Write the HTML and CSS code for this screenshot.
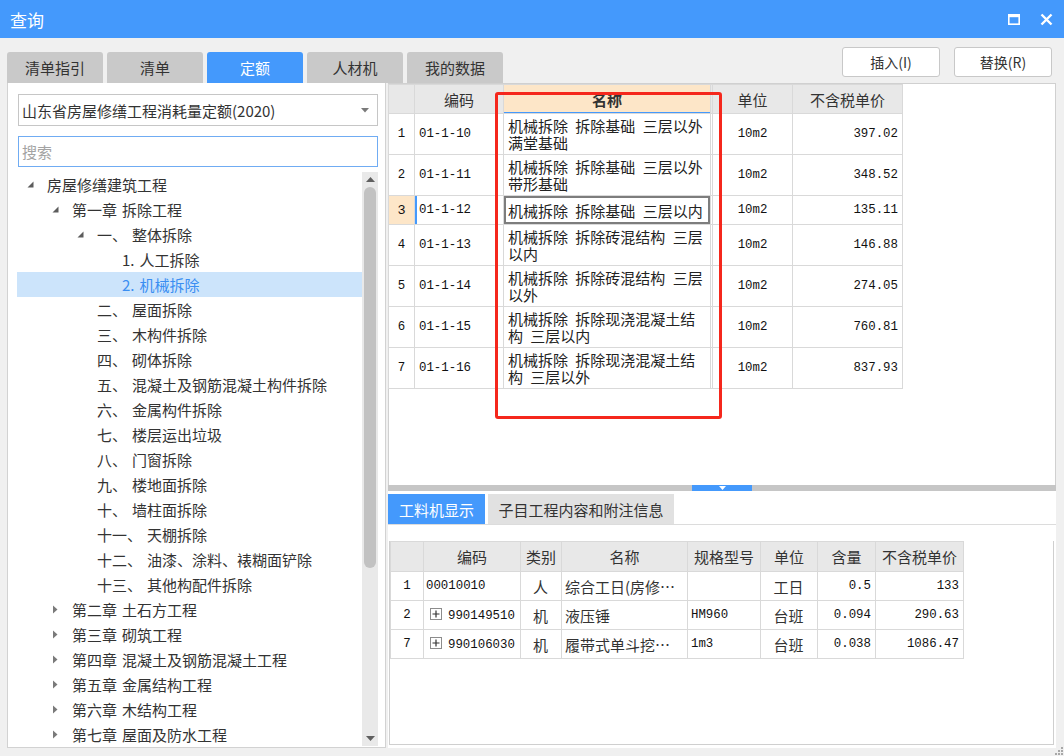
FILE: index.html
```html
<!DOCTYPE html>
<html lang="zh-CN">
<head>
<meta charset="utf-8">
<title>查询</title>
<link rel="stylesheet" href="styles.css">
</head>
<body>
<div class="window">
  <header class="titlebar">
    <span class="title">查询</span>
    <div class="win-ctrls">
      <svg class="ic-max" width="12" height="11" viewBox="0 0 12 11"><rect x="0" y="0" width="12" height="3.2" fill="#fff"/><rect x="0.8" y="1" width="10.4" height="9.2" fill="none" stroke="#fff" stroke-width="1.6"/></svg>
      <svg class="ic-close" width="13" height="13" viewBox="0 0 13 13"><path d="M1.5 1.5 L11.5 11.5 M11.5 1.5 L1.5 11.5" stroke="#fff" stroke-width="2.4"/></svg>
    </div>
  </header>

  <div class="toolbar">
    <div class="tabs">
      <div class="tab">清单指引</div>
      <div class="tab">清单</div>
      <div class="tab active">定额</div>
      <div class="tab">人材机</div>
      <div class="tab">我的数据</div>
    </div>
    <div class="actions">
      <button class="btn">插入(I)</button>
      <button class="btn">替换(R)</button>
    </div>
  </div>

  <div class="main">
    <aside class="left">
      <div class="select">
        <span class="select-text">山东省房屋修缮工程消耗量定额(2020)</span>
        <svg width="8" height="5" viewBox="0 0 8 5"><polygon points="0,0 8,0 4,4.5" fill="#7a7a7a"/></svg>
      </div>
      <div class="search">搜索</div>
      <div class="tree-wrap">
        <ul class="tree">
          <li class="node l0"><span class="tw"><svg width="7" height="7" viewBox="0 0 7 7"><polygon points="6.5,0.5 6.5,6.5 0.5,6.5" fill="#5c5c5c"/></svg></span>房屋修缮建筑工程</li>
          <li class="node l1"><span class="tw"><svg width="7" height="7" viewBox="0 0 7 7"><polygon points="6.5,0.5 6.5,6.5 0.5,6.5" fill="#5c5c5c"/></svg></span>第一章 拆除工程</li>
          <li class="node l2"><span class="tw"><svg width="7" height="7" viewBox="0 0 7 7"><polygon points="6.5,0.5 6.5,6.5 0.5,6.5" fill="#5c5c5c"/></svg></span>一、 整体拆除</li>
          <li class="node l3"><span class="tw"></span>1. 人工拆除</li>
          <li class="node l3 sel"><span class="tw"></span>2. 机械拆除</li>
          <li class="node l2"><span class="tw"></span>二、 屋面拆除</li>
          <li class="node l2"><span class="tw"></span>三、 木构件拆除</li>
          <li class="node l2"><span class="tw"></span>四、 砌体拆除</li>
          <li class="node l2"><span class="tw"></span>五、 混凝土及钢筋混凝土构件拆除</li>
          <li class="node l2"><span class="tw"></span>六、 金属构件拆除</li>
          <li class="node l2"><span class="tw"></span>七、 楼层运出垃圾</li>
          <li class="node l2"><span class="tw"></span>八、 门窗拆除</li>
          <li class="node l2"><span class="tw"></span>九、 楼地面拆除</li>
          <li class="node l2"><span class="tw"></span>十、 墙柱面拆除</li>
          <li class="node l2"><span class="tw"></span>十一、 天棚拆除</li>
          <li class="node l2"><span class="tw"></span>十二、 油漆、涂料、裱糊面铲除</li>
          <li class="node l2"><span class="tw"></span>十三、 其他构配件拆除</li>
          <li class="node l1"><span class="tw"><svg width="6" height="9" viewBox="0 0 6 9"><polygon points="1,0.5 5.5,4.5 1,8.5" fill="#7a7a7a"/></svg></span>第二章 土石方工程</li>
          <li class="node l1"><span class="tw"><svg width="6" height="9" viewBox="0 0 6 9"><polygon points="1,0.5 5.5,4.5 1,8.5" fill="#7a7a7a"/></svg></span>第三章 砌筑工程</li>
          <li class="node l1"><span class="tw"><svg width="6" height="9" viewBox="0 0 6 9"><polygon points="1,0.5 5.5,4.5 1,8.5" fill="#7a7a7a"/></svg></span>第四章 混凝土及钢筋混凝土工程</li>
          <li class="node l1"><span class="tw"><svg width="6" height="9" viewBox="0 0 6 9"><polygon points="1,0.5 5.5,4.5 1,8.5" fill="#7a7a7a"/></svg></span>第五章 金属结构工程</li>
          <li class="node l1"><span class="tw"><svg width="6" height="9" viewBox="0 0 6 9"><polygon points="1,0.5 5.5,4.5 1,8.5" fill="#7a7a7a"/></svg></span>第六章 木结构工程</li>
          <li class="node l1"><span class="tw"><svg width="6" height="9" viewBox="0 0 6 9"><polygon points="1,0.5 5.5,4.5 1,8.5" fill="#7a7a7a"/></svg></span>第七章 屋面及防水工程</li>
        </ul>
        <div class="scrollbar">
          <div class="sb-arrow"><svg width="9" height="5" viewBox="0 0 9 5"><polygon points="0,5 9,5 4.5,0" fill="#5f5f5f"/></svg></div>
          <div class="thumb"></div>
          <div class="sb-fill"></div>
          <div class="sb-arrow"><svg width="9" height="5" viewBox="0 0 9 5"><polygon points="0,0 9,0 4.5,5" fill="#5f5f5f"/></svg></div>
        </div>
      </div>
    </aside>

    <section class="right">
      <div class="grid-top">
        <table class="grid grid-main">
          <colgroup>
            <col class="c-no"><col class="c-code"><col class="c-name"><col class="c-gap"><col class="c-unit"><col class="c-price">
          </colgroup>
          <thead>
            <tr>
              <th></th><th>编码</th><th class="h-sel">名称</th><th></th><th>单位</th><th>不含税单价</th>
            </tr>
          </thead>
          <tbody>
            <tr class="tall"><td class="no mono">1</td><td class="mono">01-1-10</td><td class="name">机械拆除 拆除基础 三层以外<br>满堂基础</td><td></td><td class="mono center">10m2</td><td class="mono num">397.02</td></tr>
            <tr class="tall"><td class="no mono">2</td><td class="mono">01-1-11</td><td class="name">机械拆除 拆除基础 三层以外<br>带形基础</td><td></td><td class="mono center">10m2</td><td class="mono num">348.52</td></tr>
            <tr class="short cur"><td class="no mono cur-no">3</td><td class="mono cur-code">01-1-12</td><td class="name cur-name">机械拆除 拆除基础 三层以内</td><td></td><td class="mono center">10m2</td><td class="mono num">135.11</td></tr>
            <tr class="tall"><td class="no mono">4</td><td class="mono">01-1-13</td><td class="name">机械拆除 拆除砖混结构 三层<br>以内</td><td></td><td class="mono center">10m2</td><td class="mono num">146.88</td></tr>
            <tr class="tall"><td class="no mono">5</td><td class="mono">01-1-14</td><td class="name">机械拆除 拆除砖混结构 三层<br>以外</td><td></td><td class="mono center">10m2</td><td class="mono num">274.05</td></tr>
            <tr class="tall"><td class="no mono">6</td><td class="mono">01-1-15</td><td class="name">机械拆除 拆除现浇混凝土结<br>构 三层以内</td><td></td><td class="mono center">10m2</td><td class="mono num">760.81</td></tr>
            <tr class="tall"><td class="no mono">7</td><td class="mono">01-1-16</td><td class="name">机械拆除 拆除现浇混凝土结<br>构 三层以外</td><td></td><td class="mono center">10m2</td><td class="mono num">837.93</td></tr>
          </tbody>
        </table>
      </div>

      <div class="splitter"><span class="split-handle"><svg width="7" height="4" viewBox="0 0 7 4"><polygon points="0,0 7,0 3.5,4" fill="#fff"/></svg></span></div>

      <div class="bottom">
        <div class="subtabs">
          <div class="subtab active">工料机显示</div>
          <div class="subtab wide">子目工程内容和附注信息</div>
        </div>
        <div class="subcontent">
          <table class="grid grid-sub">
            <colgroup>
              <col class="s-no"><col class="s-code"><col class="s-type"><col class="s-name"><col class="s-spec"><col class="s-unit"><col class="s-qty"><col class="s-price">
            </colgroup>
            <thead>
              <tr><th></th><th>编码</th><th>类别</th><th>名称</th><th>规格型号</th><th>单位</th><th>含量</th><th>不含税单价</th></tr>
            </thead>
            <tbody>
              <tr><td class="no mono">1</td><td class="mono code">00010010</td><td class="center">人</td><td>综合工日(房修…</td><td></td><td class="center">工日</td><td class="mono num">0.5</td><td class="mono num">133</td></tr>
              <tr><td class="no mono">2</td><td class="mono code"><svg class="plus" width="12" height="12" viewBox="0 0 12 12"><rect x="0.5" y="0.5" width="11" height="11" fill="#fff" stroke="#8c8c8c"/><path d="M2.5 6H9.5M6 2.5V9.5" stroke="#333" stroke-width="1.2"/></svg>990149510</td><td class="center">机</td><td>液压锤</td><td class="mono">HM960</td><td class="center">台班</td><td class="mono num">0.094</td><td class="mono num">290.63</td></tr>
              <tr><td class="no mono">7</td><td class="mono code"><svg class="plus" width="12" height="12" viewBox="0 0 12 12"><rect x="0.5" y="0.5" width="11" height="11" fill="#fff" stroke="#8c8c8c"/><path d="M2.5 6H9.5M6 2.5V9.5" stroke="#333" stroke-width="1.2"/></svg>990106030</td><td class="center">机</td><td>履带式单斗挖…</td><td class="mono">1m3</td><td class="center">台班</td><td class="mono num">0.038</td><td class="mono num">1086.47</td></tr>
            </tbody>
          </table>
        </div>
      </div>
    </section>
  </div>

  <div class="red-box"></div>
  <svg class="grip" width="8" height="8" viewBox="0 0 8 8"><g fill="#a8a8a8"><rect x="6" y="0" width="2" height="2"/><rect x="3" y="3" width="2" height="2"/><rect x="6" y="3" width="2" height="2"/><rect x="0" y="6" width="2" height="2"/><rect x="3" y="6" width="2" height="2"/><rect x="6" y="6" width="2" height="2"/></g></svg>
</div>
</body>
</html>
```

FILE: styles.css
```css
* { box-sizing: border-box; }
html, body { margin: 0; padding: 0; }
body {
  width: 1064px;
  height: 756px;
  overflow: hidden;
  background: #f0f0f0;
  font-family: "Noto Sans CJK SC", "Noto Sans", sans-serif;
  font-size: 15px;
  color: #333;
}
.window {
  position: relative;
  width: 1064px;
  height: 756px;
  display: flex;
  flex-direction: column;
}

/* title bar */
.titlebar {
  flex: 0 0 38px;
  background: #4499fc;
  color: #fff;
  display: flex;
  align-items: center;
  justify-content: space-between;
  padding: 0 11px 0 10px;
}
.title { font-size: 17px; line-height: 1; }
.win-ctrls { display: flex; align-items: center; gap: 20px; }
.win-ctrls svg { display: block; }

/* toolbar */
.toolbar {
  flex: 0 0 45px;
  display: flex;
  padding: 0 12px 0 7px;
}
.tabs { display: flex; gap: 4px; align-self: flex-end; }
.tab {
  width: 96px;
  height: 31px;
  display: flex;
  align-items: center;
  justify-content: center;
  background: #c9c9c9;
  border-radius: 3px 3px 0 0;
  color: #333;
}
.tab.active { background: #4499fc; color: #fff; }
.actions { margin-left: auto; margin-top: 9px; display: flex; gap: 14px; align-self: flex-start; }
.btn {
  width: 98px;
  height: 30px;
  padding: 0;
  border: 1px solid #c8c8c8;
  border-radius: 3px;
  background: #fff;
  font-family: "Noto Sans CJK SC", sans-serif;
  font-size: 14px;
  color: #333;
}

/* main */
.main {
  flex: 1;
  min-height: 0;
  display: flex;
  gap: 2px;
  padding: 0 8px 8px 7px;
}
.left {
  width: 379px;
  flex: none;
  background: #fff;
  border: 1px solid #d2d2d2;
  border-top: none;
  display: flex;
  flex-direction: column;
  padding: 11px 7px 1px 10px;
}
.select {
  height: 32px;
  flex: none;
  border: 1px solid #c6c6c6;
  display: flex;
  align-items: center;
  justify-content: space-between;
  padding: 0 8px 0 3px;
}
.select svg { display: block; }
.search {
  margin-top: 10px;
  height: 31px;
  flex: none;
  border: 1px solid #70acf3;
  display: flex;
  align-items: center;
  padding-left: 3px;
  color: #a3a3a3;
}
.tree-wrap {
  margin-top: 5px;
  margin-left: -1px;
  flex: 1;
  min-height: 0;
  display: flex;
}
.tree {
  flex: 1;
  list-style: none;
  margin: 0;
  padding: 0;
  overflow: hidden;
}
.node {
  height: 25px;
  display: flex;
  align-items: center;
  white-space: nowrap;
  word-spacing: 1.6px;
  color: #333;
}
.l0 { padding-left: 8px; }
.l1 { padding-left: 33px; }
.l2 { padding-left: 58px; }
.l3 { padding-left: 83px; }
.tw {
  width: 22px;
  flex: none;
  display: flex;
  align-items: center;
  padding-left: 2px;
}
.tw svg { display: block; }
.node.sel { background: #cce4fb; color: #3a8ef2; }

.scrollbar {
  width: 16px;
  flex: none;
  background: #e9e9e9;
  display: flex;
  flex-direction: column;
  align-items: center;
}
.sb-arrow {
  height: 15px;
  flex: none;
  display: flex;
  align-items: center;
  justify-content: center;
}
.sb-arrow svg { display: block; }
.thumb {
  width: 12px;
  height: 381px;
  flex: none;
  background: #c2c2c2;
  border-radius: 6px;
}
.sb-fill { flex: 1; }

/* right side */
.right {
  flex: 1;
  min-width: 0;
  display: flex;
  flex-direction: column;
}
.grid-top {
  height: 402px;
  flex: none;
  background: #fff;
  border: 1px solid #d0d0d0;
  border-bottom: none;
}

.grid {
  border-collapse: collapse;
  table-layout: fixed;
}
.grid th, .grid td {
  border: 1px solid #d9d9d9;
  padding: 0 4px;
  font-weight: normal;
  white-space: nowrap;
  overflow: hidden;
  text-align: left;
  vertical-align: middle;
}
.grid th {
  background: #e8e8e8;
  text-align: center;
  color: #333;
}
.grid-main { width: 514px; margin-left: -1px; }
.grid-main thead tr { height: 29px; }
.c-no { width: 26px; }
.c-code { width: 89px; }
.c-name { width: 207px; }
.c-gap { width: 2px; }
.c-unit { width: 80px; }
.c-price { width: 110px; }
.grid-main td:nth-child(4), .grid-main th:nth-child(4) { padding: 0; }
.grid-main tr.tall { height: 41px; }
.grid-main tr.short { height: 29px; }
.grid th.h-sel {
  background: #fde6c8;
  font-weight: bold;
  box-shadow: inset 0 -1px 0 #4499fc;
}
.name {
  line-height: 17px;
  word-spacing: 4px;
  color: #222;
}
.mono {
  font-family: "Liberation Mono", monospace;
  font-size: 12.4px;
  color: #111;
}
.no { text-align: center !important; padding: 0 !important; }
.center { text-align: center !important; }
.num { text-align: right !important; }
.cur-no { background: #fde6c8; font-weight: bold; font-size: 13.5px; }
.cur-code { box-shadow: inset 2px 0 0 #4499fc; }
.cur-name { box-shadow: inset 0 0 0 2px #7d7d7d; }

.splitter {
  height: 6px;
  flex: none;
  background: #c6c6c6;
  display: flex;
  justify-content: center;
}
.split-handle {
  width: 60px;
  height: 6px;
  background: #4499fc;
  display: flex;
  align-items: flex-start;
  justify-content: center;
  padding-top: 1px;
}
.split-handle svg { display: block; }

.bottom {
  flex: 1;
  min-height: 0;
  background: #fff;
  display: flex;
  flex-direction: column;
  padding: 3px 0 3px 0;
}
.subtabs {
  display: flex;
  gap: 3px;
  height: 31px;
  flex: none;
  border-bottom: 1px solid #dcdcdc;
}
.subtab {
  height: 30px;
  width: 97px;
  display: flex;
  align-items: center;
  justify-content: center;
  background: #e1e1e1;
  color: #333;
}
.subtab.active { background: #4499fc; color: #fff; }
.subtab.wide { width: 186px; }
.subcontent {
  flex: 1;
  margin: 16px 2px 0 1px;
  border: 1px solid #cfcfcf;
  border-top: none;
}
.grid-sub { width: 573px; }
.grid-sub thead tr { height: 30px; }
.grid-sub tbody tr { height: 29px; }
.s-no { width: 33px; }
.s-code { width: 97px; }
.s-type { width: 41px; }
.s-name { width: 126px; }
.s-spec { width: 73px; }
.s-unit { width: 57px; }
.s-qty { width: 58px; }
.s-price { width: 88px; }
.grid-sub td { padding: 0 4px 0 3px; }
.grid-sub td.code { padding-left: 2px; }
.plus {
  display: inline-block;
  vertical-align: -1px;
  margin: 0 6px 0 4px;
}

/* overlays */
.red-box {
  position: absolute;
  left: 495px;
  top: 92px;
  width: 227px;
  height: 327px;
  border: 3px solid #f5271c;
  border-radius: 3px;
  pointer-events: none;
}
.grip {
  position: absolute;
  right: 1px;
  bottom: 1px;
}
```
